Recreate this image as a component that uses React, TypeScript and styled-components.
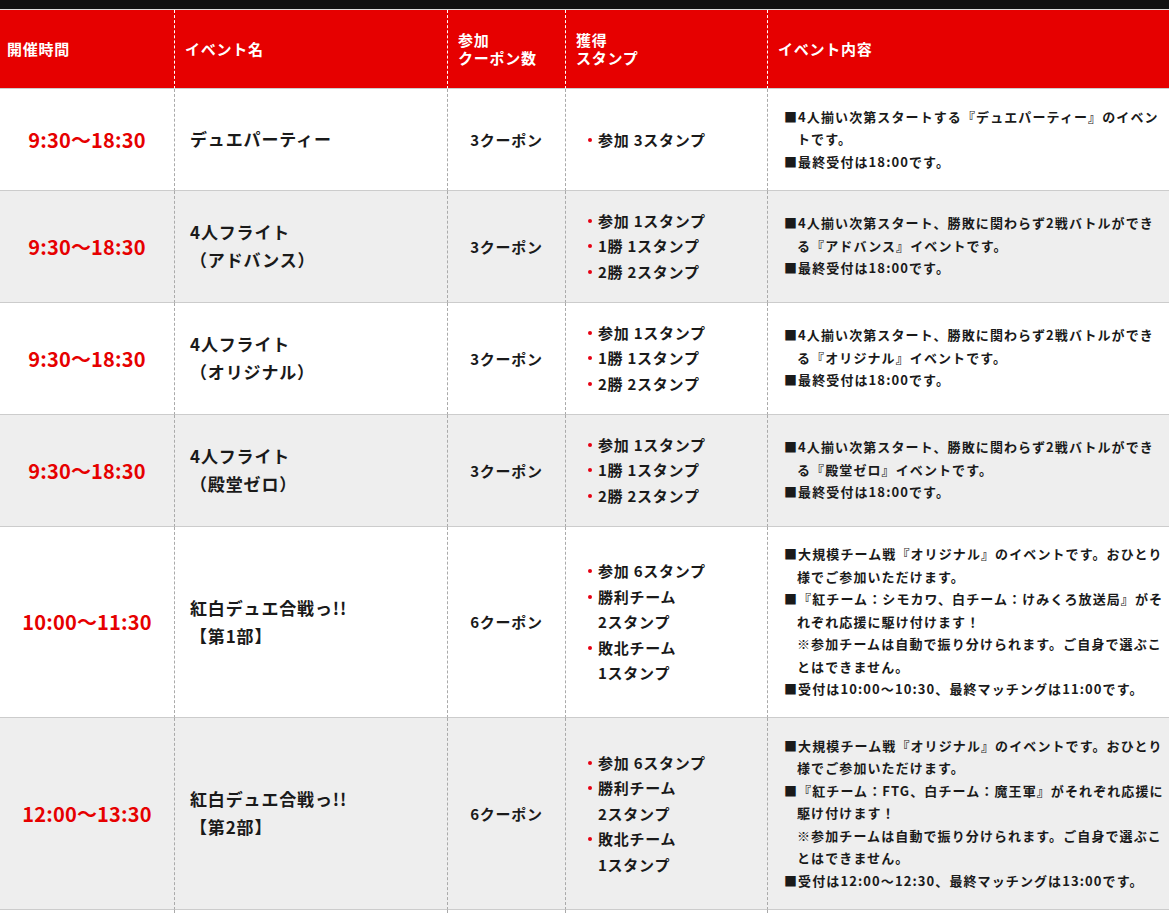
import React from "react";
import styled, { createGlobalStyle } from "styled-components";

interface EventRow {
  time: string;
  name: string[];
  coupon: string;
  stamps: string[][];
  details: string[][];
}

const rows: EventRow[] = [
  {
    time: "9:30〜18:30",
    name: ["デュエパーティー"],
    coupon: "3クーポン",
    stamps: [["参加 3スタンプ"]],
    details: [["■4人揃い次第スタートする『デュエパーティー』のイベントです。"], ["■最終受付は18:00です。"]],
  },
  {
    time: "9:30〜18:30",
    name: ["4人フライト", "（アドバンス）"],
    coupon: "3クーポン",
    stamps: [["参加 1スタンプ"], ["1勝 1スタンプ"], ["2勝 2スタンプ"]],
    details: [
      ["■4人揃い次第スタート、勝敗に関わらず2戦バトルができる『アドバンス』イベントです。"],
      ["■最終受付は18:00です。"],
    ],
  },
  {
    time: "9:30〜18:30",
    name: ["4人フライト", "（オリジナル）"],
    coupon: "3クーポン",
    stamps: [["参加 1スタンプ"], ["1勝 1スタンプ"], ["2勝 2スタンプ"]],
    details: [
      ["■4人揃い次第スタート、勝敗に関わらず2戦バトルができる『オリジナル』イベントです。"],
      ["■最終受付は18:00です。"],
    ],
  },
  {
    time: "9:30〜18:30",
    name: ["4人フライト", "（殿堂ゼロ）"],
    coupon: "3クーポン",
    stamps: [["参加 1スタンプ"], ["1勝 1スタンプ"], ["2勝 2スタンプ"]],
    details: [
      ["■4人揃い次第スタート、勝敗に関わらず2戦バトルができる『殿堂ゼロ』イベントです。"],
      ["■最終受付は18:00です。"],
    ],
  },
  {
    time: "10:00〜11:30",
    name: ["紅白デュエ合戦っ!!", "【第1部】"],
    coupon: "6クーポン",
    stamps: [["参加 6スタンプ"], ["勝利チーム", "2スタンプ"], ["敗北チーム", "1スタンプ"]],
    details: [
      ["■大規模チーム戦『オリジナル』のイベントです。おひとり様でご参加いただけます。"],
      [
        "■『紅チーム：シモカワ、白チーム：けみくろ放送局』がそれぞれ応援に駆け付けます！",
        "※参加チームは自動で振り分けられます。ご自身で選ぶことはできません。",
      ],
      ["■受付は10:00〜10:30、最終マッチングは11:00です。"],
    ],
  },
  {
    time: "12:00〜13:30",
    name: ["紅白デュエ合戦っ!!", "【第2部】"],
    coupon: "6クーポン",
    stamps: [["参加 6スタンプ"], ["勝利チーム", "2スタンプ"], ["敗北チーム", "1スタンプ"]],
    details: [
      ["■大規模チーム戦『オリジナル』のイベントです。おひとり様でご参加いただけます。"],
      [
        "■『紅チーム：FTG、白チーム：魔王軍』がそれぞれ応援に駆け付けます！",
        "※参加チームは自動で振り分けられます。ご自身で選ぶことはできません。",
      ],
      ["■受付は12:00〜12:30、最終マッチングは13:00です。"],
    ],
  },
  {
    time: "14:00〜15:30",
    name: ["紅白デュエ合戦っ!!", "【第3部】"],
    coupon: "6クーポン",
    stamps: [["参加 6スタンプ"], ["勝利チーム", "2スタンプ"], ["敗北チーム", "1スタンプ"]],
    details: [
      ["■大規模チーム戦『オリジナル』のイベントです。おひとり様でご参加いただけます。"],
      ["■受付は14:00〜14:30、最終マッチングは15:00です。"],
    ],
  },
];

function lines(parts: string[]) {
  return parts.map((part, index) => (
    <React.Fragment key={index}>
      {index > 0 && <br />}
      {part}
    </React.Fragment>
  ));
}

function App() {
  return (
    <>
      <GlobalStyle />
      <TopBar />
      <Table>
        <colgroup>
          <col style={{ width: 174 }} />
          <col style={{ width: 273 }} />
          <col style={{ width: 118 }} />
          <col style={{ width: 202 }} />
          <col />
        </colgroup>
        <thead>
          <tr>
            <HeadCell $first>開催時間</HeadCell>
            <HeadCell>イベント名</HeadCell>
            <HeadCell>
              参加
              <br />
              クーポン数
            </HeadCell>
            <HeadCell>
              獲得
              <br />
              スタンプ
            </HeadCell>
            <HeadCell>イベント内容</HeadCell>
          </tr>
        </thead>
        <tbody>
          {rows.map((row, index) => (
            <Row key={index} $shaded={index % 2 === 1}>
              <TimeCell>{row.time}</TimeCell>
              <NameCell>{lines(row.name)}</NameCell>
              <CouponCell>{row.coupon}</CouponCell>
              <StampCell>
                <StampList>
                  {row.stamps.map((stamp, i) => (
                    <StampItem key={i}>
                      <Dot />
                      <span>{lines(stamp)}</span>
                    </StampItem>
                  ))}
                </StampList>
              </StampCell>
              <DetailCell>
                {row.details.map((detail, i) => (
                  <Note key={i}>{lines(detail)}</Note>
                ))}
              </DetailCell>
            </Row>
          ))}
        </tbody>
      </Table>
    </>
  );
}

const GlobalStyle = createGlobalStyle`
  html, body {
    margin: 0;
    padding: 0;
    background: #ffffff;
  }
  body {
    font-family: "Noto Sans CJK JP", "Noto Sans", sans-serif;
    font-weight: 700;
    color: #1a1a1a;
  }
`;

const TopBar = styled.div`
  height: 9px;
  background: #111111;
  border-bottom: 1px solid #dddddd;
`;

const Table = styled.table`
  width: 100%;
  table-layout: fixed;
  border-collapse: separate;
  border-spacing: 0;
`;

const HeadCell = styled.th<{ $first?: boolean }>`
  box-sizing: border-box;
  height: 79px;
  padding: 0 10px 0 ${({ $first }) => ($first ? "7px" : "10px")};
  background: #e60000;
  color: #ffffff;
  font-size: 15px;
  line-height: 18px;
  letter-spacing: 0.05em;
  text-align: left;
  vertical-align: middle;
  border-bottom: 1px solid #cccccc;
  border-left: ${({ $first }) => ($first ? "none" : "1px dashed #ffffff")};
`;

const Row = styled.tr<{ $shaded: boolean }>`
  background: ${({ $shaded }) => ($shaded ? "#eeeeee" : "#ffffff")};

  & > td {
    border-bottom: 1px solid #cccccc;
    vertical-align: middle;
  }
  & > td + td {
    border-left: 1px dashed #aaaaaa;
  }
`;

const TimeCell = styled.td`
  text-align: center;
  color: #e60000;
  font-size: 20px;
  letter-spacing: 0.01em;
  padding: 0 4px;
`;

const NameCell = styled.td`
  padding: 0 10px 0 15px;
  font-size: 17px;
  line-height: 28px;
  letter-spacing: 0.05em;
`;

const CouponCell = styled.td`
  text-align: center;
  font-size: 15px;
  letter-spacing: 0.05em;
`;

const StampCell = styled.td`
  padding: 17.25px 8px 17.25px 22px;
`;

const StampList = styled.ul`
  list-style: none;
  margin: 0;
  padding: 0;
`;

const StampItem = styled.li`
  display: flex;
  align-items: flex-start;
  font-size: 15px;
  line-height: 25.5px;
  letter-spacing: 0.05em;
`;

const Dot = styled.span`
  flex: none;
  width: 4px;
  height: 4px;
  margin: 11px 6px 0 0;
  border-radius: 50%;
  background: #e60012;
`;

const DetailCell = styled.td`
  padding: 16.5px 2px 16.5px 16px;
`;

const Note = styled.p`
  margin: 0;
  padding-left: 1em;
  text-indent: -1em;
  font-size: 13px;
  line-height: 22.5px;
  letter-spacing: 1.1px;
`;

export default App;
